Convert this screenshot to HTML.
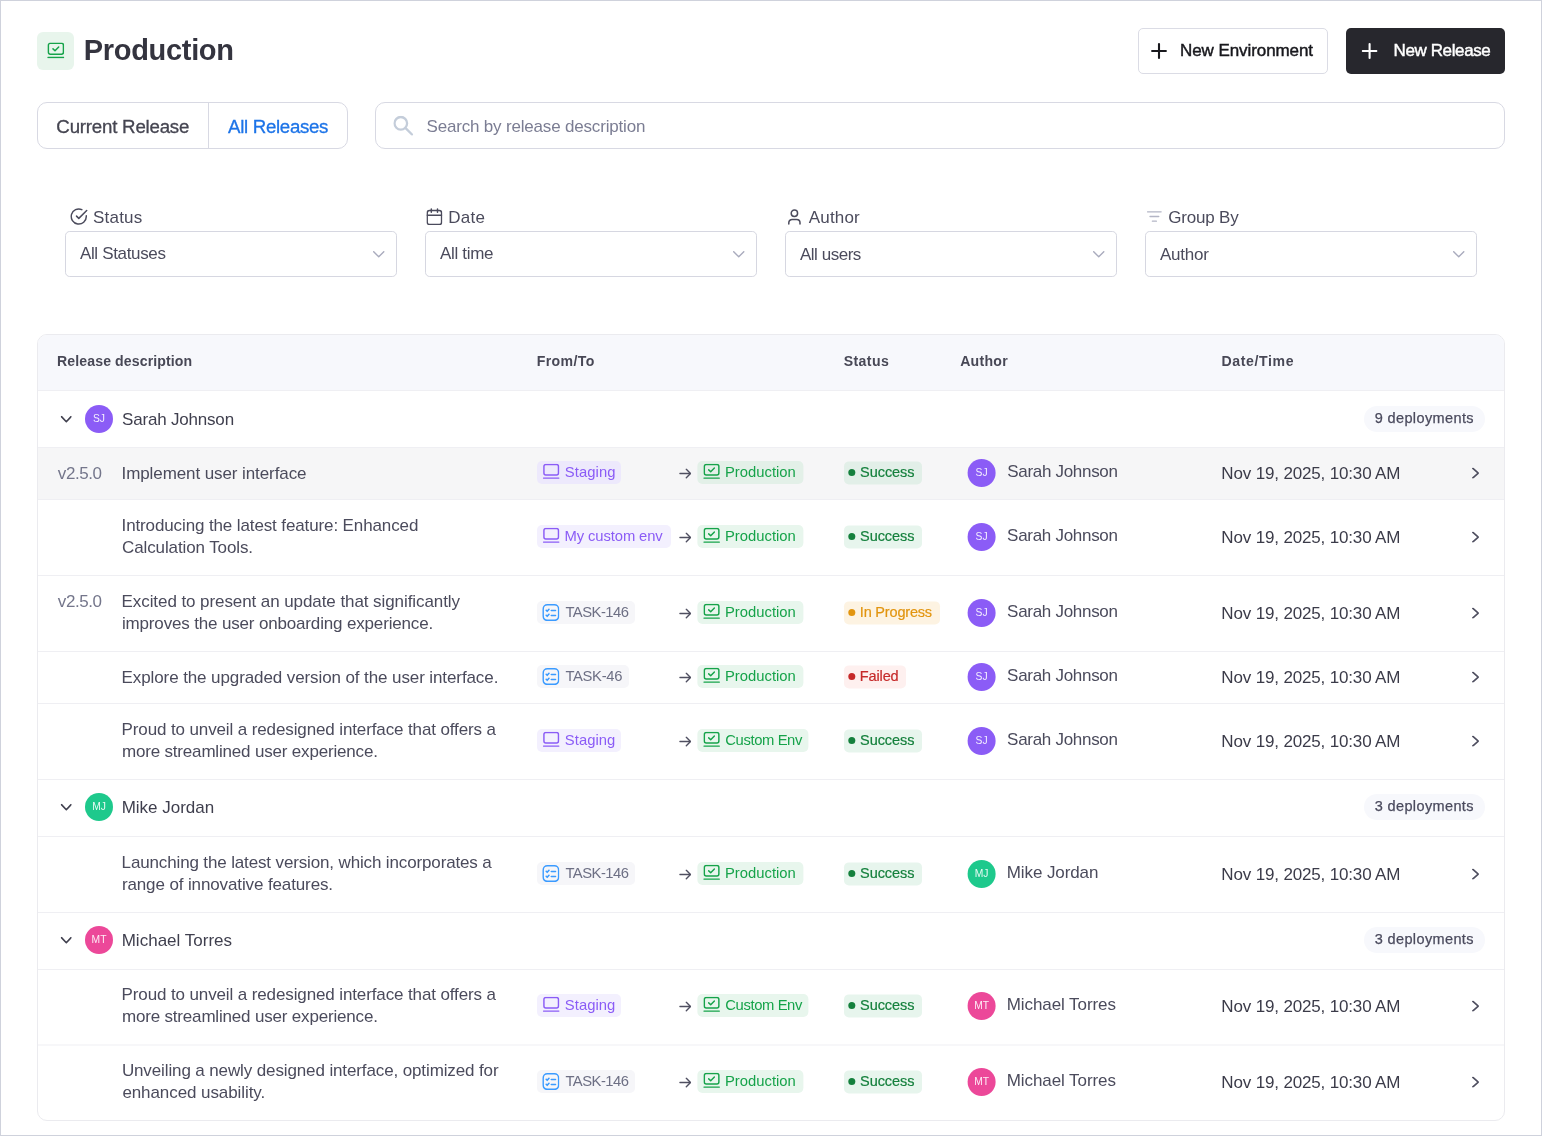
<!DOCTYPE html>
<html lang="en"><head><meta charset="utf-8"><title>Production – Releases</title>
<meta name="viewport" content="width=1542">
<style>
*{box-sizing:border-box;margin:0;padding:0}
html,body{width:1542px;height:1136px;overflow:hidden;background:#fff}
body{font-family:"Liberation Sans", Arial, sans-serif;color:#4b4b5c;position:relative}
.page{position:absolute;left:0;top:0;width:1542px;height:1136px;border:1px solid #cfd2dc;background:#fff;overflow:hidden;will-change:transform}
.box,.t{position:absolute}
.t{white-space:nowrap;font-weight:400;display:block}
h1.t,.b{font-weight:700}
.iconbox{border-radius:6px;background:#e8f5ec}
.btn{border-radius:5px}
.btn.o{border:1px solid #dbdce5;background:#fff}
.btn.p{background:#27272d}
.tabs{border:1px solid #d8d9e3;border-radius:10px;background:#fff}
.tabs i{position:absolute;left:170px;top:0;width:1px;height:100%;background:#d8d9e3}
.search{border:1px solid #d8d9e3;border-radius:10px;background:#fff}
.sel{border:1px solid #d6d7e1;border-radius:4.7px;background:#fff}
.table{border:1px solid #ebebef;border-radius:10px;background:#fff;overflow:hidden}
.thead{background:#f7f8fc}
.ln{height:1px;background:#efeff3}
.hov{background:#f6f6f7}
.av{width:28px;height:28px;border-radius:50%;color:#fff;font-size:10.3px;line-height:28px;text-align:center;color:rgba(255,255,255,.9)}
.bdg{border-radius:5px}
.pill{border-radius:13px;background:#f7f8fc}
.dot{width:7.4px;height:7.4px;border-radius:50%}

</style></head><body>
<div class="page">
<div class="box iconbox" style="left:36px;top:31px;width:37px;height:38px;"></div>
<svg class="box" style="left:46px;top:41px;transform:translate(0.2px,0.6px);" width="17.4" height="15.66" viewBox="0 0 17.4 15.66" fill="none" aria-hidden="true"><g stroke="#16a34a" stroke-width="1.5" stroke-linecap="round" stroke-linejoin="round"><rect x="1.15" y="0.75" width="15.10" height="10.84" rx="1.9"/><path d="M5.80 6.27l2.00 1.90 3.70 -3.80"/><path d="M0.75 14.91H16.65"/></g></svg>
<h1 id="t1" class="t" style="left:82.82px;top:30px;font-size:29px;line-height:38px;letter-spacing:-0.32px;color:#34343f;">Production</h1>
<div class="box btn o" style="left:1137px;top:27px;width:189.5px;height:46px;"></div>
<svg class="box" style="left:1150px;top:42px;" width="16" height="16" viewBox="0 0 16 16" fill="none" aria-hidden="true"><g stroke="#18181d" stroke-width="2.1" stroke-linecap="round" stroke-linejoin="round"><path d="M8 1.1v13.8M1.1 8h13.8"/></g></svg>
<span id="t2" class="t" style="left:1179.06px;top:38px;font-size:17px;line-height:23px;letter-spacing:-0.08px;color:#18181d;-webkit-text-stroke:0.45px currentColor;">New Environment</span>
<div class="box btn p" style="left:1345px;top:27px;width:159px;height:46px;"></div>
<svg class="box" style="left:1360px;top:42px;transform:translate(0.6px,0px);" width="16" height="16" viewBox="0 0 16 16" fill="none" aria-hidden="true"><g stroke="#ffffff" stroke-width="2.1" stroke-linecap="round" stroke-linejoin="round"><path d="M8 1.1v13.8M1.1 8h13.8"/></g></svg>
<span id="t3" class="t" style="left:1392.52px;top:38px;font-size:17px;line-height:23px;letter-spacing:-0.38px;color:#ffffff;-webkit-text-stroke:0.45px currentColor;">New Release</span>
<div class="box tabs" style="left:36px;top:101px;width:311px;height:47px;"><i></i></div>
<span id="t4" class="t" style="left:55.37px;top:113px;font-size:18.7px;line-height:25px;letter-spacing:-0.22px;color:#454551;-webkit-text-stroke:0.3px currentColor;">Current Release</span>
<span id="t5" class="t" style="left:227.06px;top:113px;font-size:18.7px;line-height:25px;letter-spacing:-0.32px;color:#1d74e8;-webkit-text-stroke:0.3px currentColor;">All Releases</span>
<div class="box search" style="left:374px;top:101px;width:1130px;height:47px;"></div>
<svg class="box" style="left:392px;top:114px;transform:translate(0.3px,0.8px);" width="20" height="20" viewBox="0 0 20 20" fill="none" aria-hidden="true"><g stroke="#c4cdda" stroke-width="2.3" stroke-linecap="round" stroke-linejoin="round"><circle cx="7.5" cy="7.5" r="6.3"/><path d="M12.3 12.3l6.4 6.4"/></g></svg>
<span id="t6" class="t" style="left:425.47px;top:114px;font-size:17px;line-height:23px;letter-spacing:-0.18px;color:#7b7d93;">Search by release description</span>
<svg class="box" style="left:69px;top:206px;transform:translate(0.2px,0.6px);" width="18" height="18" viewBox="0 0 18 18" fill="none" aria-hidden="true"><g stroke="#4b4b5c" stroke-width="1.5" stroke-linecap="round" stroke-linejoin="round"><path d="M16.1 8.2v0.7a7.55 7.55 0 1 1-4.48-6.9"/><path d="M16.5 2.9l-7.9 7.9-2.3-2.3"/></g></svg>
<span id="t7" class="t" style="left:92.08px;top:205px;font-size:17px;line-height:23px;letter-spacing:0.18px;color:#4b4b5c;">Status</span>
<div class="box sel" style="left:64px;top:230px;width:332px;height:46px;"></div>
<span id="t8" class="t" style="left:78.92px;top:241px;font-size:17px;line-height:23px;letter-spacing:-0.34px;color:#4b4b5c;">All Statuses</span>
<svg class="box" style="left:371px;top:249px;transform:translate(0.9px,0.9px);" width="11.7" height="6.7" viewBox="0 0 11.7 6.7" fill="none" aria-hidden="true"><g stroke="#a9abbd" stroke-width="1.4" stroke-linecap="round" stroke-linejoin="round"><path d="M0.80 0.80L5.85 5.90L10.90 0.80"/></g></svg>
<svg class="box" style="left:425px;top:207px;transform:translate(0.4px,0.1px);" width="16" height="17.4" viewBox="0 0 16 17.4" fill="none" aria-hidden="true"><g stroke="#4b4b5c" stroke-width="1.5" stroke-linecap="round" stroke-linejoin="round"><rect x="0.8" y="2.5" width="14.4" height="14" rx="2.3"/><path d="M0.8 7.2h14.4"/><path d="M4.9 0.8v3.4M11.1 0.8v3.4"/></g></svg>
<span id="t9" class="t" style="left:447.15px;top:205px;font-size:17px;line-height:23px;letter-spacing:0.27px;color:#4b4b5c;">Date</span>
<div class="box sel" style="left:424px;top:230px;width:332px;height:46px;"></div>
<span id="t10" class="t" style="left:438.92px;top:241px;font-size:17px;line-height:23px;letter-spacing:-0.3px;color:#4b4b5c;">All time</span>
<svg class="box" style="left:731px;top:249px;transform:translate(0.9px,0.9px);" width="11.7" height="6.7" viewBox="0 0 11.7 6.7" fill="none" aria-hidden="true"><g stroke="#a9abbd" stroke-width="1.4" stroke-linecap="round" stroke-linejoin="round"><path d="M0.80 0.80L5.85 5.90L10.90 0.80"/></g></svg>
<svg class="box" style="left:787px;top:208px;" width="12.8" height="15.8" viewBox="0 0 12.8 15.8" fill="none" aria-hidden="true"><g stroke="#4b4b5c" stroke-width="1.5" stroke-linecap="round" stroke-linejoin="round"><circle cx="6.4" cy="4.2" r="3.2"/><path d="M0.8 15v-1.3a3.3 3.3 0 0 1 3.3-3.3h4.6a3.3 3.3 0 0 1 3.3 3.3v1.3"/></g></svg>
<span id="t11" class="t" style="left:807.85px;top:205px;font-size:17px;line-height:23px;letter-spacing:0.15px;color:#4b4b5c;">Author</span>
<div class="box sel" style="left:784px;top:230px;width:332px;height:46px;"></div>
<span id="t12" class="t" style="left:798.92px;top:242px;font-size:17px;line-height:23px;letter-spacing:-0.47px;color:#4b4b5c;">All users</span>
<svg class="box" style="left:1091px;top:249px;transform:translate(0.9px,0.9px);" width="11.7" height="6.7" viewBox="0 0 11.7 6.7" fill="none" aria-hidden="true"><g stroke="#a9abbd" stroke-width="1.4" stroke-linecap="round" stroke-linejoin="round"><path d="M0.80 0.80L5.85 5.90L10.90 0.80"/></g></svg>
<svg class="box" style="left:1145px;top:210px;transform:translate(0.8px,0.1px);" width="15.2" height="10.8" viewBox="0 0 15.2 10.8" fill="none" aria-hidden="true"><g stroke="#b3b5c5" stroke-width="1.3" stroke-linecap="round" stroke-linejoin="round"><path d="M0.7 0.7h13.8"/><path d="M3.2 5.4h8.8"/><path d="M5.6 10.1h4"/></g></svg>
<span id="t13" class="t" style="left:1167.25px;top:205px;font-size:17px;line-height:23px;letter-spacing:-0.19px;color:#4b4b5c;">Group By</span>
<div class="box sel" style="left:1144px;top:230px;width:332px;height:46px;"></div>
<span id="t14" class="t" style="left:1158.92px;top:242px;font-size:17px;line-height:23px;letter-spacing:-0.24px;color:#4b4b5c;">Author</span>
<svg class="box" style="left:1451px;top:249px;transform:translate(0.9px,0.9px);" width="11.7" height="6.7" viewBox="0 0 11.7 6.7" fill="none" aria-hidden="true"><g stroke="#a9abbd" stroke-width="1.4" stroke-linecap="round" stroke-linejoin="round"><path d="M0.80 0.80L5.85 5.90L10.90 0.80"/></g></svg>
<div class="box table" style="left:36px;top:333px;width:1468px;height:787px">
<div class="box thead" style="left:0px;top:0px;width:1466px;height:55px;"></div>
<div class="box hov" style="left:0px;top:113px;width:1466px;height:51px;"></div>
<div class="box ln" style="left:0px;top:55px;width:1466px;"></div>
<div class="box ln" style="left:0px;top:112px;width:1466px;"></div>
<div class="box ln" style="left:0px;top:164px;width:1466px;"></div>
<div class="box ln" style="left:0px;top:240px;width:1466px;"></div>
<div class="box ln" style="left:0px;top:316px;width:1466px;"></div>
<div class="box ln" style="left:0px;top:368px;width:1466px;"></div>
<div class="box ln" style="left:0px;top:444px;width:1466px;"></div>
<div class="box ln" style="left:0px;top:501px;width:1466px;"></div>
<div class="box ln" style="left:0px;top:577px;width:1466px;"></div>
<div class="box ln" style="left:0px;top:634px;width:1466px;"></div>
<div class="box ln" style="left:0px;top:709px;transform:translate(0px,0.5px);width:1466px;"></div>
<span id="t15" class="t b" style="left:19.04px;top:17px;font-size:14.1px;line-height:18px;letter-spacing:0.11px;color:#484856;">Release description</span>
<span id="t16" class="t b" style="left:498.72px;top:17px;font-size:14.1px;line-height:18px;letter-spacing:0.38px;color:#484856;">From/To</span>
<span id="t17" class="t b" style="left:805.63px;top:17px;font-size:14.1px;line-height:18px;letter-spacing:0.41px;color:#484856;">Status</span>
<span id="t18" class="t b" style="left:922.14px;top:17px;font-size:14.1px;line-height:18px;letter-spacing:0.28px;color:#484856;">Author</span>
<span id="t19" class="t b" style="left:1183.56px;top:17px;font-size:14.1px;line-height:18px;letter-spacing:0.61px;color:#484856;">Date/Time</span>
<svg class="box" style="left:22px;top:80px;transform:translate(0.6px,0.7px);" width="11.4" height="7" viewBox="0 0 11.4 7" fill="none" aria-hidden="true"><g stroke="#41414f" stroke-width="1.6" stroke-linecap="round" stroke-linejoin="round"><path d="M0.90 0.90L5.70 6.10L10.50 0.90"/></g></svg>
<div class="box av" style="left:47px;top:70px;background:#8b5cf6">SJ</div>
<span id="t20" class="t" style="left:84.01px;top:73px;font-size:17px;line-height:23px;letter-spacing:-0.19px;color:#3f3f4e;">Sarah Johnson</span>
<div class="box pill" style="left:1326px;top:71px;width:121px;height:25.7px;"></div>
<span id="t21" class="t" style="left:1336.64px;top:73px;font-size:14.5px;line-height:20px;letter-spacing:0.39px;color:#4b4b5e;-webkit-text-stroke:0.25px currentColor;">9 deployments</span>
<span id="t22" class="t" style="left:19.85px;top:127px;font-size:17px;line-height:23px;letter-spacing:-0.44px;color:#74768b;">v2.5.0</span>
<span id="t23" class="t" style="left:83.54px;top:127px;font-size:17px;line-height:23px;letter-spacing:-0.09px;color:#4b4b5c;">Implement user interface</span>
<div class="box bdg" style="left:499px;top:126px;width:84px;height:23.4px;background:#ede9fc"></div>
<svg class="box" style="left:504px;top:128px;transform:translate(0.8px,0.8px);" width="16.8" height="15.12" viewBox="0 0 16.8 15.12" fill="none" aria-hidden="true"><g stroke="#8b5cf6" stroke-width="1.45" stroke-linecap="round" stroke-linejoin="round"><rect x="1.12" y="0.72" width="14.55" height="10.46" rx="1.9"/><path d="M0.72 14.40H16.07"/></g></svg>
<span id="t24" class="t" style="left:526.83px;top:127px;font-size:14.8px;line-height:20px;letter-spacing:0.07px;color:#8b5cf6;">Staging</span>
<svg class="box" style="left:641px;top:133px;transform:translate(0.1px,0.2px);" width="12.4" height="10.6" viewBox="0 0 12.4 10.6" fill="none" aria-hidden="true"><g stroke="#4f4f60" stroke-width="1.4" stroke-linecap="round" stroke-linejoin="round"><path d="M0.8 5.3h10.4"/><path d="M7.2 1l4.2 4.3-4.2 4.3"/></g></svg>
<div class="box bdg" style="left:659px;top:126px;transform:translate(0.4px,0px);width:105.6px;height:23.4px;background:#e3f0e8"></div>
<svg class="box" style="left:665px;top:128px;transform:translate(0.2px,0.8px);" width="16.8" height="15.12" viewBox="0 0 16.8 15.12" fill="none" aria-hidden="true"><g stroke="#16a34a" stroke-width="1.45" stroke-linecap="round" stroke-linejoin="round"><rect x="1.12" y="0.72" width="14.55" height="10.46" rx="1.9"/><path d="M5.50 6.06l2.00 1.90 3.70 -3.80"/><path d="M0.72 14.40H16.07"/></g></svg>
<span id="t25" class="t" style="left:686.99px;top:127px;font-size:14.8px;line-height:20px;letter-spacing:0.01px;color:#16a34a;">Production</span>
<div class="box bdg" style="left:806px;top:126px;transform:translate(0px,0.4px);width:78px;height:23.2px;background:#e2efe8"></div>
<div class="box dot" style="left:810px;top:134px;transform:translate(0.3px,0px);background:#15803d"></div>
<span id="t26" class="t" style="left:822.05px;top:127px;font-size:14.5px;line-height:20px;letter-spacing:-0.05px;color:#15803d;-webkit-text-stroke:0.2px currentColor;">Success</span>
<div class="box av" style="left:929px;top:124px;transform:translate(0.6px,0px);background:#8b5cf6">SJ</div>
<span id="t27" class="t" style="left:969.2px;top:125px;font-size:17px;line-height:23px;letter-spacing:-0.3px;color:#4b4b5c;">Sarah Johnson</span>
<span id="t28" class="t" style="left:1183.37px;top:127px;font-size:17px;line-height:23px;letter-spacing:-0.16px;color:#3b3b49;">Nov 19, 2025, 10:30 AM</span>
<svg class="box" style="left:1433px;top:132px;transform:translate(0.9px,0.5px);" width="7.4" height="11.4" viewBox="0 0 7.4 11.4" fill="none" aria-hidden="true"><g stroke="#4f4f60" stroke-width="1.7" stroke-linecap="round" stroke-linejoin="round"><path d="M1 0.95l5.4 4.75-5.4 4.75"/></g></svg>
<span id="t29" class="t" style="left:83.54px;top:179px;font-size:17px;line-height:23px;letter-spacing:-0.12px;color:#4b4b5c;">Introducing the latest feature: Enhanced</span>
<span id="t30" class="t" style="left:84.1px;top:201px;font-size:17px;line-height:23px;letter-spacing:-0.12px;color:#4b4b5c;">Calculation Tools.</span>
<div class="box bdg" style="left:499px;top:190px;width:133.8px;height:23.4px;background:#f3f0fe"></div>
<svg class="box" style="left:504px;top:192px;transform:translate(0.8px,0.8px);" width="16.8" height="15.12" viewBox="0 0 16.8 15.12" fill="none" aria-hidden="true"><g stroke="#8b5cf6" stroke-width="1.45" stroke-linecap="round" stroke-linejoin="round"><rect x="1.12" y="0.72" width="14.55" height="10.46" rx="1.9"/><path d="M0.72 14.40H16.07"/></g></svg>
<span id="t31" class="t" style="left:526.59px;top:191px;font-size:14.8px;line-height:20px;letter-spacing:-0.11px;color:#8b5cf6;">My custom env</span>
<svg class="box" style="left:641px;top:197px;transform:translate(0.1px,0.2px);" width="12.4" height="10.6" viewBox="0 0 12.4 10.6" fill="none" aria-hidden="true"><g stroke="#4f4f60" stroke-width="1.4" stroke-linecap="round" stroke-linejoin="round"><path d="M0.8 5.3h10.4"/><path d="M7.2 1l4.2 4.3-4.2 4.3"/></g></svg>
<div class="box bdg" style="left:659px;top:190px;transform:translate(0.4px,0px);width:105.6px;height:23.4px;background:#e8f6ed"></div>
<svg class="box" style="left:665px;top:192px;transform:translate(0.2px,0.8px);" width="16.8" height="15.12" viewBox="0 0 16.8 15.12" fill="none" aria-hidden="true"><g stroke="#16a34a" stroke-width="1.45" stroke-linecap="round" stroke-linejoin="round"><rect x="1.12" y="0.72" width="14.55" height="10.46" rx="1.9"/><path d="M5.50 6.06l2.00 1.90 3.70 -3.80"/><path d="M0.72 14.40H16.07"/></g></svg>
<span id="t32" class="t" style="left:686.99px;top:191px;font-size:14.8px;line-height:20px;letter-spacing:0.01px;color:#16a34a;">Production</span>
<div class="box bdg" style="left:806px;top:190px;transform:translate(0px,0.4px);width:78px;height:23.2px;background:#e7f5ed"></div>
<div class="box dot" style="left:810px;top:198px;transform:translate(0.3px,0px);background:#15803d"></div>
<span id="t33" class="t" style="left:822.08px;top:191px;font-size:14.5px;line-height:20px;letter-spacing:-0.07px;color:#15803d;-webkit-text-stroke:0.2px currentColor;">Success</span>
<div class="box av" style="left:929px;top:188px;transform:translate(0.6px,0px);background:#8b5cf6">SJ</div>
<span id="t34" class="t" style="left:969.08px;top:189px;font-size:17px;line-height:23px;letter-spacing:-0.29px;color:#4b4b5c;">Sarah Johnson</span>
<span id="t35" class="t" style="left:1183.37px;top:191px;font-size:17px;line-height:23px;letter-spacing:-0.16px;color:#3b3b49;">Nov 19, 2025, 10:30 AM</span>
<svg class="box" style="left:1433px;top:196px;transform:translate(0.9px,0.5px);" width="7.4" height="11.4" viewBox="0 0 7.4 11.4" fill="none" aria-hidden="true"><g stroke="#4f4f60" stroke-width="1.7" stroke-linecap="round" stroke-linejoin="round"><path d="M1 0.95l5.4 4.75-5.4 4.75"/></g></svg>
<span id="t36" class="t" style="left:19.85px;top:255px;font-size:17px;line-height:23px;letter-spacing:-0.43px;color:#74768b;">v2.5.0</span>
<span id="t37" class="t" style="left:83.57px;top:255px;font-size:17px;line-height:23px;letter-spacing:-0.08px;color:#4b4b5c;">Excited to present an update that significantly</span>
<span id="t38" class="t" style="left:83.93px;top:277px;font-size:17px;line-height:23px;letter-spacing:-0.16px;color:#4b4b5c;">improves the user onboarding experience.</span>
<div class="box bdg" style="left:499px;top:266px;width:98px;height:23.4px;background:#f6f6f9"></div>
<svg class="box" style="left:504px;top:269px;transform:translate(0.3px,0px);" width="17.2" height="17.2" viewBox="0 0 17.2 17.2" fill="none" aria-hidden="true"><g stroke="#3b9bff" stroke-width="1.6" stroke-linecap="round" stroke-linejoin="round"><rect x="0.80" y="0.80" width="15.60" height="15.60" rx="4.3"/><path d="M3.9 6.3l1.0 1.0 1.8-2.0"/><path d="M9.0 6.5h4.2"/><path d="M3.9 11.3l1.0 1.0 1.8-2.0"/><path d="M9.0 11.5h4.2"/></g></svg>
<span id="t39" class="t" style="left:527.41px;top:267px;font-size:14.8px;line-height:20px;letter-spacing:-0.51px;color:#6d6f84;">TASK-146</span>
<svg class="box" style="left:641px;top:273px;transform:translate(0.1px,0.2px);" width="12.4" height="10.6" viewBox="0 0 12.4 10.6" fill="none" aria-hidden="true"><g stroke="#4f4f60" stroke-width="1.4" stroke-linecap="round" stroke-linejoin="round"><path d="M0.8 5.3h10.4"/><path d="M7.2 1l4.2 4.3-4.2 4.3"/></g></svg>
<div class="box bdg" style="left:659px;top:266px;transform:translate(0.4px,0px);width:105.6px;height:23.4px;background:#e8f6ed"></div>
<svg class="box" style="left:665px;top:268px;transform:translate(0.2px,0.8px);" width="16.8" height="15.12" viewBox="0 0 16.8 15.12" fill="none" aria-hidden="true"><g stroke="#16a34a" stroke-width="1.45" stroke-linecap="round" stroke-linejoin="round"><rect x="1.12" y="0.72" width="14.55" height="10.46" rx="1.9"/><path d="M5.50 6.06l2.00 1.90 3.70 -3.80"/><path d="M0.72 14.40H16.07"/></g></svg>
<span id="t40" class="t" style="left:686.99px;top:267px;font-size:14.8px;line-height:20px;letter-spacing:0.01px;color:#16a34a;">Production</span>
<div class="box bdg" style="left:806px;top:266px;transform:translate(0px,0.4px);width:96px;height:23.2px;background:#fdf3e2"></div>
<div class="box dot" style="left:810px;top:274px;transform:translate(0.3px,0px);background:#e2950f"></div>
<span id="t41" class="t" style="left:821.79px;top:267px;font-size:14.5px;line-height:20px;letter-spacing:-0.18px;color:#e2950f;-webkit-text-stroke:0.2px currentColor;">In Progress</span>
<div class="box av" style="left:929px;top:264px;transform:translate(0.6px,0px);background:#8b5cf6">SJ</div>
<span id="t42" class="t" style="left:969.08px;top:265px;font-size:17px;line-height:23px;letter-spacing:-0.29px;color:#4b4b5c;">Sarah Johnson</span>
<span id="t43" class="t" style="left:1183.37px;top:267px;font-size:17px;line-height:23px;letter-spacing:-0.16px;color:#3b3b49;">Nov 19, 2025, 10:30 AM</span>
<svg class="box" style="left:1433px;top:272px;transform:translate(0.9px,0.5px);" width="7.4" height="11.4" viewBox="0 0 7.4 11.4" fill="none" aria-hidden="true"><g stroke="#4f4f60" stroke-width="1.7" stroke-linecap="round" stroke-linejoin="round"><path d="M1 0.95l5.4 4.75-5.4 4.75"/></g></svg>
<span id="t44" class="t" style="left:83.57px;top:331px;font-size:17px;line-height:23px;letter-spacing:-0.1px;color:#4b4b5c;">Explore the upgraded version of the user interface.</span>
<div class="box bdg" style="left:499px;top:330px;width:92px;height:23.4px;background:#f6f6f9"></div>
<svg class="box" style="left:504px;top:333px;transform:translate(0.3px,0px);" width="17.2" height="17.2" viewBox="0 0 17.2 17.2" fill="none" aria-hidden="true"><g stroke="#3b9bff" stroke-width="1.6" stroke-linecap="round" stroke-linejoin="round"><rect x="0.80" y="0.80" width="15.60" height="15.60" rx="4.3"/><path d="M3.9 6.3l1.0 1.0 1.8-2.0"/><path d="M9.0 6.5h4.2"/><path d="M3.9 11.3l1.0 1.0 1.8-2.0"/><path d="M9.0 11.5h4.2"/></g></svg>
<span id="t45" class="t" style="left:527.41px;top:331px;font-size:14.8px;line-height:20px;letter-spacing:-0.33px;color:#6d6f84;">TASK-46</span>
<svg class="box" style="left:641px;top:337px;transform:translate(0.1px,0.2px);" width="12.4" height="10.6" viewBox="0 0 12.4 10.6" fill="none" aria-hidden="true"><g stroke="#4f4f60" stroke-width="1.4" stroke-linecap="round" stroke-linejoin="round"><path d="M0.8 5.3h10.4"/><path d="M7.2 1l4.2 4.3-4.2 4.3"/></g></svg>
<div class="box bdg" style="left:659px;top:330px;transform:translate(0.4px,0px);width:105.6px;height:23.4px;background:#e8f6ed"></div>
<svg class="box" style="left:665px;top:332px;transform:translate(0.2px,0.8px);" width="16.8" height="15.12" viewBox="0 0 16.8 15.12" fill="none" aria-hidden="true"><g stroke="#16a34a" stroke-width="1.45" stroke-linecap="round" stroke-linejoin="round"><rect x="1.12" y="0.72" width="14.55" height="10.46" rx="1.9"/><path d="M5.50 6.06l2.00 1.90 3.70 -3.80"/><path d="M0.72 14.40H16.07"/></g></svg>
<span id="t46" class="t" style="left:686.99px;top:331px;font-size:14.8px;line-height:20px;letter-spacing:0.01px;color:#16a34a;">Production</span>
<div class="box bdg" style="left:806px;top:330px;transform:translate(0px,0.4px);width:61.8px;height:23.2px;background:#fef0ef"></div>
<div class="box dot" style="left:810px;top:338px;transform:translate(0.3px,0px);background:#c62a2a"></div>
<span id="t47" class="t" style="left:821.7px;top:331px;font-size:14.5px;line-height:20px;letter-spacing:-0.1px;color:#c62a2a;-webkit-text-stroke:0.2px currentColor;">Failed</span>
<div class="box av" style="left:929px;top:328px;transform:translate(0.6px,0px);background:#8b5cf6">SJ</div>
<span id="t48" class="t" style="left:969.08px;top:329px;font-size:17px;line-height:23px;letter-spacing:-0.29px;color:#4b4b5c;">Sarah Johnson</span>
<span id="t49" class="t" style="left:1183.37px;top:331px;font-size:17px;line-height:23px;letter-spacing:-0.16px;color:#3b3b49;">Nov 19, 2025, 10:30 AM</span>
<svg class="box" style="left:1433px;top:336px;transform:translate(0.9px,0.5px);" width="7.4" height="11.4" viewBox="0 0 7.4 11.4" fill="none" aria-hidden="true"><g stroke="#4f4f60" stroke-width="1.7" stroke-linecap="round" stroke-linejoin="round"><path d="M1 0.95l5.4 4.75-5.4 4.75"/></g></svg>
<span id="t50" class="t" style="left:83.57px;top:383px;font-size:17px;line-height:23px;letter-spacing:-0.12px;color:#4b4b5c;">Proud to unveil a redesigned interface that offers a</span>
<span id="t51" class="t" style="left:83.94px;top:405px;font-size:17px;line-height:23px;letter-spacing:-0.18px;color:#4b4b5c;">more streamlined user experience.</span>
<div class="box bdg" style="left:499px;top:394px;width:84px;height:23.4px;background:#f3f0fe"></div>
<svg class="box" style="left:504px;top:396px;transform:translate(0.8px,0.8px);" width="16.8" height="15.12" viewBox="0 0 16.8 15.12" fill="none" aria-hidden="true"><g stroke="#8b5cf6" stroke-width="1.45" stroke-linecap="round" stroke-linejoin="round"><rect x="1.12" y="0.72" width="14.55" height="10.46" rx="1.9"/><path d="M0.72 14.40H16.07"/></g></svg>
<span id="t52" class="t" style="left:526.83px;top:395px;font-size:14.8px;line-height:20px;letter-spacing:0.04px;color:#8b5cf6;">Staging</span>
<svg class="box" style="left:641px;top:401px;transform:translate(0.1px,0.2px);" width="12.4" height="10.6" viewBox="0 0 12.4 10.6" fill="none" aria-hidden="true"><g stroke="#4f4f60" stroke-width="1.4" stroke-linecap="round" stroke-linejoin="round"><path d="M0.8 5.3h10.4"/><path d="M7.2 1l4.2 4.3-4.2 4.3"/></g></svg>
<div class="box bdg" style="left:659px;top:394px;transform:translate(0.4px,0px);width:111.4px;height:23.4px;background:#e8f6ed"></div>
<svg class="box" style="left:665px;top:396px;transform:translate(0.2px,0.8px);" width="16.8" height="15.12" viewBox="0 0 16.8 15.12" fill="none" aria-hidden="true"><g stroke="#16a34a" stroke-width="1.45" stroke-linecap="round" stroke-linejoin="round"><rect x="1.12" y="0.72" width="14.55" height="10.46" rx="1.9"/><path d="M5.50 6.06l2.00 1.90 3.70 -3.80"/><path d="M0.72 14.40H16.07"/></g></svg>
<span id="t53" class="t" style="left:687.28px;top:395px;font-size:14.8px;line-height:20px;letter-spacing:-0.39px;color:#16a34a;">Custom Env</span>
<div class="box bdg" style="left:806px;top:394px;transform:translate(0px,0.4px);width:78px;height:23.2px;background:#e7f5ed"></div>
<div class="box dot" style="left:810px;top:402px;transform:translate(0.3px,0px);background:#15803d"></div>
<span id="t54" class="t" style="left:822.08px;top:395px;font-size:14.5px;line-height:20px;letter-spacing:-0.07px;color:#15803d;-webkit-text-stroke:0.2px currentColor;">Success</span>
<div class="box av" style="left:929px;top:392px;transform:translate(0.6px,0px);background:#8b5cf6">SJ</div>
<span id="t55" class="t" style="left:969.08px;top:393px;font-size:17px;line-height:23px;letter-spacing:-0.29px;color:#4b4b5c;">Sarah Johnson</span>
<span id="t56" class="t" style="left:1183.37px;top:395px;font-size:17px;line-height:23px;letter-spacing:-0.16px;color:#3b3b49;">Nov 19, 2025, 10:30 AM</span>
<svg class="box" style="left:1433px;top:400px;transform:translate(0.9px,0.5px);" width="7.4" height="11.4" viewBox="0 0 7.4 11.4" fill="none" aria-hidden="true"><g stroke="#4f4f60" stroke-width="1.7" stroke-linecap="round" stroke-linejoin="round"><path d="M1 0.95l5.4 4.75-5.4 4.75"/></g></svg>
<svg class="box" style="left:22px;top:468px;transform:translate(0.6px,0.7px);" width="11.4" height="7" viewBox="0 0 11.4 7" fill="none" aria-hidden="true"><g stroke="#41414f" stroke-width="1.6" stroke-linecap="round" stroke-linejoin="round"><path d="M0.90 0.90L5.70 6.10L10.50 0.90"/></g></svg>
<div class="box av" style="left:47px;top:458px;background:#1ec98c">MJ</div>
<span id="t57" class="t" style="left:83.71px;top:461px;font-size:17px;line-height:23px;letter-spacing:-0.02px;color:#3f3f4e;">Mike Jordan</span>
<div class="box pill" style="left:1326px;top:459px;width:121px;height:25.7px;"></div>
<span id="t58" class="t" style="left:1336.73px;top:461px;font-size:14.5px;line-height:20px;letter-spacing:0.37px;color:#4b4b5e;-webkit-text-stroke:0.25px currentColor;">3 deployments</span>
<span id="t59" class="t" style="left:83.57px;top:516px;font-size:17px;line-height:23px;letter-spacing:-0.14px;color:#4b4b5c;">Launching the latest version, which incorporates a</span>
<span id="t60" class="t" style="left:83.91px;top:538px;font-size:17px;line-height:23px;letter-spacing:-0.12px;color:#4b4b5c;">range of innovative features.</span>
<div class="box bdg" style="left:499px;top:527px;width:98px;height:23.4px;background:#f6f6f9"></div>
<svg class="box" style="left:504px;top:530px;transform:translate(0.3px,0px);" width="17.2" height="17.2" viewBox="0 0 17.2 17.2" fill="none" aria-hidden="true"><g stroke="#3b9bff" stroke-width="1.6" stroke-linecap="round" stroke-linejoin="round"><rect x="0.80" y="0.80" width="15.60" height="15.60" rx="4.3"/><path d="M3.9 6.3l1.0 1.0 1.8-2.0"/><path d="M9.0 6.5h4.2"/><path d="M3.9 11.3l1.0 1.0 1.8-2.0"/><path d="M9.0 11.5h4.2"/></g></svg>
<span id="t61" class="t" style="left:527.41px;top:528px;font-size:14.8px;line-height:20px;letter-spacing:-0.51px;color:#6d6f84;">TASK-146</span>
<svg class="box" style="left:641px;top:534px;transform:translate(0.1px,0.2px);" width="12.4" height="10.6" viewBox="0 0 12.4 10.6" fill="none" aria-hidden="true"><g stroke="#4f4f60" stroke-width="1.4" stroke-linecap="round" stroke-linejoin="round"><path d="M0.8 5.3h10.4"/><path d="M7.2 1l4.2 4.3-4.2 4.3"/></g></svg>
<div class="box bdg" style="left:659px;top:527px;transform:translate(0.4px,0px);width:105.6px;height:23.4px;background:#e8f6ed"></div>
<svg class="box" style="left:665px;top:529px;transform:translate(0.2px,0.8px);" width="16.8" height="15.12" viewBox="0 0 16.8 15.12" fill="none" aria-hidden="true"><g stroke="#16a34a" stroke-width="1.45" stroke-linecap="round" stroke-linejoin="round"><rect x="1.12" y="0.72" width="14.55" height="10.46" rx="1.9"/><path d="M5.50 6.06l2.00 1.90 3.70 -3.80"/><path d="M0.72 14.40H16.07"/></g></svg>
<span id="t62" class="t" style="left:686.99px;top:528px;font-size:14.8px;line-height:20px;letter-spacing:0.01px;color:#16a34a;">Production</span>
<div class="box bdg" style="left:806px;top:527px;transform:translate(0px,0.4px);width:78px;height:23.2px;background:#e7f5ed"></div>
<div class="box dot" style="left:810px;top:535px;transform:translate(0.3px,0px);background:#15803d"></div>
<span id="t63" class="t" style="left:822.08px;top:528px;font-size:14.5px;line-height:20px;letter-spacing:-0.07px;color:#15803d;-webkit-text-stroke:0.2px currentColor;">Success</span>
<div class="box av" style="left:929px;top:525px;transform:translate(0.6px,0px);background:#1ec98c">MJ</div>
<span id="t64" class="t" style="left:968.78px;top:526px;font-size:17px;line-height:23px;letter-spacing:-0.1px;color:#4b4b5c;">Mike Jordan</span>
<span id="t65" class="t" style="left:1183.37px;top:528px;font-size:17px;line-height:23px;letter-spacing:-0.16px;color:#3b3b49;">Nov 19, 2025, 10:30 AM</span>
<svg class="box" style="left:1433px;top:533px;transform:translate(0.9px,0.5px);" width="7.4" height="11.4" viewBox="0 0 7.4 11.4" fill="none" aria-hidden="true"><g stroke="#4f4f60" stroke-width="1.7" stroke-linecap="round" stroke-linejoin="round"><path d="M1 0.95l5.4 4.75-5.4 4.75"/></g></svg>
<svg class="box" style="left:22px;top:601px;transform:translate(0.6px,0.7px);" width="11.4" height="7" viewBox="0 0 11.4 7" fill="none" aria-hidden="true"><g stroke="#41414f" stroke-width="1.6" stroke-linecap="round" stroke-linejoin="round"><path d="M0.90 0.90L5.70 6.10L10.50 0.90"/></g></svg>
<div class="box av" style="left:47px;top:591px;background:#ec4899">MT</div>
<span id="t66" class="t" style="left:83.71px;top:594px;font-size:17px;line-height:23px;letter-spacing:0.01px;color:#3f3f4e;">Michael Torres</span>
<div class="box pill" style="left:1326px;top:592px;width:121px;height:25.7px;"></div>
<span id="t67" class="t" style="left:1336.73px;top:594px;font-size:14.5px;line-height:20px;letter-spacing:0.37px;color:#4b4b5e;-webkit-text-stroke:0.25px currentColor;">3 deployments</span>
<span id="t68" class="t" style="left:83.57px;top:648px;font-size:17px;line-height:23px;letter-spacing:-0.12px;color:#4b4b5c;">Proud to unveil a redesigned interface that offers a</span>
<span id="t69" class="t" style="left:83.94px;top:670px;font-size:17px;line-height:23px;letter-spacing:-0.18px;color:#4b4b5c;">more streamlined user experience.</span>
<div class="box bdg" style="left:499px;top:659px;width:84px;height:23.4px;background:#f3f0fe"></div>
<svg class="box" style="left:504px;top:661px;transform:translate(0.8px,0.8px);" width="16.8" height="15.12" viewBox="0 0 16.8 15.12" fill="none" aria-hidden="true"><g stroke="#8b5cf6" stroke-width="1.45" stroke-linecap="round" stroke-linejoin="round"><rect x="1.12" y="0.72" width="14.55" height="10.46" rx="1.9"/><path d="M0.72 14.40H16.07"/></g></svg>
<span id="t70" class="t" style="left:526.83px;top:660px;font-size:14.8px;line-height:20px;letter-spacing:0.04px;color:#8b5cf6;">Staging</span>
<svg class="box" style="left:641px;top:666px;transform:translate(0.1px,0.2px);" width="12.4" height="10.6" viewBox="0 0 12.4 10.6" fill="none" aria-hidden="true"><g stroke="#4f4f60" stroke-width="1.4" stroke-linecap="round" stroke-linejoin="round"><path d="M0.8 5.3h10.4"/><path d="M7.2 1l4.2 4.3-4.2 4.3"/></g></svg>
<div class="box bdg" style="left:659px;top:659px;transform:translate(0.4px,0px);width:111.4px;height:23.4px;background:#e8f6ed"></div>
<svg class="box" style="left:665px;top:661px;transform:translate(0.2px,0.8px);" width="16.8" height="15.12" viewBox="0 0 16.8 15.12" fill="none" aria-hidden="true"><g stroke="#16a34a" stroke-width="1.45" stroke-linecap="round" stroke-linejoin="round"><rect x="1.12" y="0.72" width="14.55" height="10.46" rx="1.9"/><path d="M5.50 6.06l2.00 1.90 3.70 -3.80"/><path d="M0.72 14.40H16.07"/></g></svg>
<span id="t71" class="t" style="left:687.28px;top:660px;font-size:14.8px;line-height:20px;letter-spacing:-0.39px;color:#16a34a;">Custom Env</span>
<div class="box bdg" style="left:806px;top:659px;transform:translate(0px,0.4px);width:78px;height:23.2px;background:#e7f5ed"></div>
<div class="box dot" style="left:810px;top:667px;transform:translate(0.3px,0px);background:#15803d"></div>
<span id="t72" class="t" style="left:822.08px;top:660px;font-size:14.5px;line-height:20px;letter-spacing:-0.07px;color:#15803d;-webkit-text-stroke:0.2px currentColor;">Success</span>
<div class="box av" style="left:929px;top:657px;transform:translate(0.6px,0px);background:#ec4899">MT</div>
<span id="t73" class="t" style="left:968.78px;top:658px;font-size:17px;line-height:23px;letter-spacing:-0.08px;color:#4b4b5c;">Michael Torres</span>
<span id="t74" class="t" style="left:1183.37px;top:660px;font-size:17px;line-height:23px;letter-spacing:-0.16px;color:#3b3b49;">Nov 19, 2025, 10:30 AM</span>
<svg class="box" style="left:1433px;top:665px;transform:translate(0.9px,0.5px);" width="7.4" height="11.4" viewBox="0 0 7.4 11.4" fill="none" aria-hidden="true"><g stroke="#4f4f60" stroke-width="1.7" stroke-linecap="round" stroke-linejoin="round"><path d="M1 0.95l5.4 4.75-5.4 4.75"/></g></svg>
<span id="t75" class="t" style="left:83.88px;top:724px;font-size:17px;line-height:23px;letter-spacing:-0.12px;color:#4b4b5c;">Unveiling a newly designed interface, optimized for</span>
<span id="t76" class="t" style="left:84.38px;top:746px;font-size:17px;line-height:23px;letter-spacing:-0.08px;color:#4b4b5c;">enhanced usability.</span>
<div class="box bdg" style="left:499px;top:735px;width:98px;height:23.4px;background:#f6f6f9"></div>
<svg class="box" style="left:504px;top:738px;transform:translate(0.3px,0px);" width="17.2" height="17.2" viewBox="0 0 17.2 17.2" fill="none" aria-hidden="true"><g stroke="#3b9bff" stroke-width="1.6" stroke-linecap="round" stroke-linejoin="round"><rect x="0.80" y="0.80" width="15.60" height="15.60" rx="4.3"/><path d="M3.9 6.3l1.0 1.0 1.8-2.0"/><path d="M9.0 6.5h4.2"/><path d="M3.9 11.3l1.0 1.0 1.8-2.0"/><path d="M9.0 11.5h4.2"/></g></svg>
<span id="t77" class="t" style="left:527.41px;top:736px;font-size:14.8px;line-height:20px;letter-spacing:-0.51px;color:#6d6f84;">TASK-146</span>
<svg class="box" style="left:641px;top:742px;transform:translate(0.1px,0.2px);" width="12.4" height="10.6" viewBox="0 0 12.4 10.6" fill="none" aria-hidden="true"><g stroke="#4f4f60" stroke-width="1.4" stroke-linecap="round" stroke-linejoin="round"><path d="M0.8 5.3h10.4"/><path d="M7.2 1l4.2 4.3-4.2 4.3"/></g></svg>
<div class="box bdg" style="left:659px;top:735px;transform:translate(0.4px,0px);width:105.6px;height:23.4px;background:#e8f6ed"></div>
<svg class="box" style="left:665px;top:737px;transform:translate(0.2px,0.8px);" width="16.8" height="15.12" viewBox="0 0 16.8 15.12" fill="none" aria-hidden="true"><g stroke="#16a34a" stroke-width="1.45" stroke-linecap="round" stroke-linejoin="round"><rect x="1.12" y="0.72" width="14.55" height="10.46" rx="1.9"/><path d="M5.50 6.06l2.00 1.90 3.70 -3.80"/><path d="M0.72 14.40H16.07"/></g></svg>
<span id="t78" class="t" style="left:686.99px;top:736px;font-size:14.8px;line-height:20px;letter-spacing:0.01px;color:#16a34a;">Production</span>
<div class="box bdg" style="left:806px;top:735px;transform:translate(0px,0.4px);width:78px;height:23.2px;background:#e7f5ed"></div>
<div class="box dot" style="left:810px;top:743px;transform:translate(0.3px,0px);background:#15803d"></div>
<span id="t79" class="t" style="left:822.08px;top:736px;font-size:14.5px;line-height:20px;letter-spacing:-0.07px;color:#15803d;-webkit-text-stroke:0.2px currentColor;">Success</span>
<div class="box av" style="left:929px;top:733px;transform:translate(0.6px,0px);background:#ec4899">MT</div>
<span id="t80" class="t" style="left:968.78px;top:734px;font-size:17px;line-height:23px;letter-spacing:-0.08px;color:#4b4b5c;">Michael Torres</span>
<span id="t81" class="t" style="left:1183.37px;top:736px;font-size:17px;line-height:23px;letter-spacing:-0.16px;color:#3b3b49;">Nov 19, 2025, 10:30 AM</span>
<svg class="box" style="left:1433px;top:741px;transform:translate(0.9px,0.5px);" width="7.4" height="11.4" viewBox="0 0 7.4 11.4" fill="none" aria-hidden="true"><g stroke="#4f4f60" stroke-width="1.7" stroke-linecap="round" stroke-linejoin="round"><path d="M1 0.95l5.4 4.75-5.4 4.75"/></g></svg>
</div>
</div>
</body></html>
